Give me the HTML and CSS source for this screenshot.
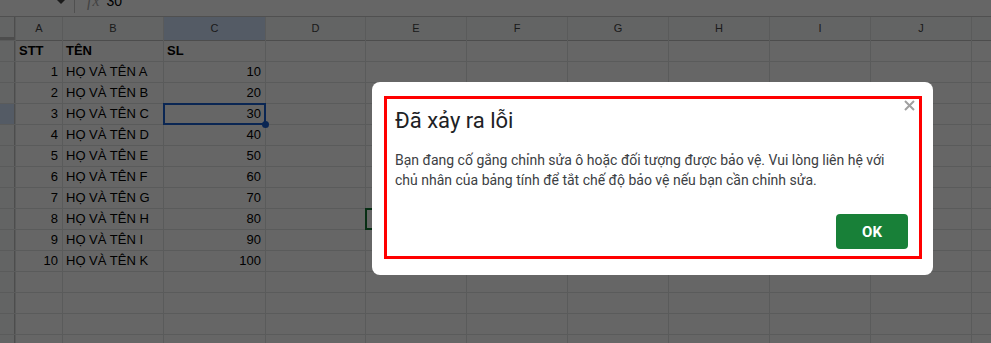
FILE: index.html
```html
<!DOCTYPE html>
<html lang="vi">
<head>
<meta charset="utf-8">
<title>Bảng tính</title>
<link rel="stylesheet" href="styles.css">
</head>
<body>
<div class="fbar">
  <div class="fbar-inner">
    <span class="caret"></span>
    <span class="sep"></span>
    <span class="fx">fx</span>
    <span class="fval">30</span>
  </div>
</div>
<div class="sheet">
  <div class="h corner"></div><div class="h col">A</div><div class="h col">B</div><div class="h col sel">C</div><div class="h col">D</div><div class="h col">E</div><div class="h col">F</div><div class="h col">G</div><div class="h col">H</div><div class="h col">I</div><div class="h col">J</div><div class="h col"></div>

  <div class="h rh"></div><div class="c b">STT</div><div class="c b">TÊN</div><div class="c b">SL</div><div class="c"></div><div class="c"></div><div class="c"></div><div class="c"></div><div class="c"></div><div class="c"></div><div class="c"></div><div class="c"></div>

  <div class="h rh"></div><div class="c n">1</div><div class="c">HỌ VÀ TÊN A</div><div class="c n">10</div><div class="c"></div><div class="c"></div><div class="c"></div><div class="c"></div><div class="c"></div><div class="c"></div><div class="c"></div><div class="c"></div>

  <div class="h rh"></div><div class="c n">2</div><div class="c">HỌ VÀ TÊN B</div><div class="c n">20</div><div class="c"></div><div class="c"></div><div class="c"></div><div class="c"></div><div class="c"></div><div class="c"></div><div class="c"></div><div class="c"></div>

  <div class="h rh sel"></div><div class="c n">3</div><div class="c">HỌ VÀ TÊN C</div><div class="c n active">30</div><div class="c"></div><div class="c"></div><div class="c"></div><div class="c"></div><div class="c"></div><div class="c"></div><div class="c"></div><div class="c"></div>

  <div class="h rh"></div><div class="c n">4</div><div class="c">HỌ VÀ TÊN D</div><div class="c n">40</div><div class="c"></div><div class="c"></div><div class="c"></div><div class="c"></div><div class="c"></div><div class="c"></div><div class="c"></div><div class="c"></div>

  <div class="h rh"></div><div class="c n">5</div><div class="c">HỌ VÀ TÊN E</div><div class="c n">50</div><div class="c"></div><div class="c"></div><div class="c"></div><div class="c"></div><div class="c"></div><div class="c"></div><div class="c"></div><div class="c"></div>

  <div class="h rh"></div><div class="c n">6</div><div class="c">HỌ VÀ TÊN F</div><div class="c n">60</div><div class="c"></div><div class="c"></div><div class="c"></div><div class="c"></div><div class="c"></div><div class="c"></div><div class="c"></div><div class="c"></div>

  <div class="h rh"></div><div class="c n">7</div><div class="c">HỌ VÀ TÊN G</div><div class="c n">70</div><div class="c"></div><div class="c"></div><div class="c"></div><div class="c"></div><div class="c"></div><div class="c"></div><div class="c"></div><div class="c"></div>

  <div class="h rh"></div><div class="c n">8</div><div class="c">HỌ VÀ TÊN H</div><div class="c n">80</div><div class="c"></div><div class="c peer"></div><div class="c"></div><div class="c"></div><div class="c"></div><div class="c"></div><div class="c"></div><div class="c"></div>

  <div class="h rh"></div><div class="c n">9</div><div class="c">HỌ VÀ TÊN I</div><div class="c n">90</div><div class="c"></div><div class="c"></div><div class="c"></div><div class="c"></div><div class="c"></div><div class="c"></div><div class="c"></div><div class="c"></div>

  <div class="h rh"></div><div class="c n">10</div><div class="c">HỌ VÀ TÊN K</div><div class="c n">100</div><div class="c"></div><div class="c"></div><div class="c"></div><div class="c"></div><div class="c"></div><div class="c"></div><div class="c"></div><div class="c"></div>

  <div class="h rh"></div><div class="c"></div><div class="c"></div><div class="c"></div><div class="c"></div><div class="c"></div><div class="c"></div><div class="c"></div><div class="c"></div><div class="c"></div><div class="c"></div><div class="c"></div>

  <div class="h rh"></div><div class="c"></div><div class="c"></div><div class="c"></div><div class="c"></div><div class="c"></div><div class="c"></div><div class="c"></div><div class="c"></div><div class="c"></div><div class="c"></div><div class="c"></div>

  <div class="h rh"></div><div class="c"></div><div class="c"></div><div class="c"></div><div class="c"></div><div class="c"></div><div class="c"></div><div class="c"></div><div class="c"></div><div class="c"></div><div class="c"></div><div class="c"></div>

  <div class="h rh"></div><div class="c"></div><div class="c"></div><div class="c"></div><div class="c"></div><div class="c"></div><div class="c"></div><div class="c"></div><div class="c"></div><div class="c"></div><div class="c"></div><div class="c"></div>
</div>

<div class="overlay"></div>

<div class="dialog" role="dialog">
  <svg class="close" width="11" height="11" viewBox="0 0 11 11" aria-hidden="true">
    <path d="M1 1 L10 10 M10 1 L1 10" stroke="#a0a0a0" stroke-width="2" fill="none"/>
  </svg>
  <div class="frame">
    <h1 class="title">Đã xảy ra lỗi</h1>
    <p class="msg">Bạn đang cố gắng chỉnh sửa ô hoặc đối tượng được bảo vệ. Vui lòng liên hệ với<br>chủ nhân của bảng tính để tắt chế độ bảo vệ nếu bạn cần chỉnh sửa.</p>
    <button class="ok">OK</button>
  </div>
</div>
</body>
</html>
```

FILE: styles.css
```css
html, body {
  margin: 0;
  padding: 0;
  width: 991px;
  height: 343px;
  overflow: hidden;
  background: #ffffff;
  font-family: "Liberation Sans", Arial, sans-serif;
}

/* formula bar (cut off at the top) */
.fbar {
  height: 16px;
  border-bottom: 1px solid #c7c7c7;
  overflow: hidden;
  background: #ffffff;
}
.fbar-inner {
  display: flex;
  align-items: center;
  height: 20px;
  margin-top: -9px;
  padding-left: 56px;
}
.caret {
  width: 0;
  height: 0;
  border-left: 5px solid transparent;
  border-right: 5px solid transparent;
  border-top: 5px solid #444444;
}
.sep {
  width: 1px;
  height: 24px;
  background: #c7c7c7;
  margin-left: 8px;
}
.fx {
  margin-left: 12px;
  font-family: "Liberation Serif", serif;
  font-style: italic;
  font-size: 16px;
  letter-spacing: 1px;
  color: #a8a8a8;
}
.fval {
  margin-left: 6px;
  font-size: 14px;
  color: #000000;
}

/* grid */
.sheet {
  display: grid;
  grid-template-columns: 15px 46px 100px 101px 99px 100px 100px 100px 100px 100px 100px 1fr;
  grid-template-rows: 23px;
  grid-auto-rows: 20px;
  gap: 1px;
  background: #e2e3e3;
}
.h {
  background: #f8f9fa;
  color: #444444;
  font-size: 11px;
  line-height: 23px;
  text-align: center;
}
.col {
  box-shadow: 0 1px 0 #c0c0c0;
}
.corner {
  border-right: 1px solid #c0c0c0;
  border-bottom: 3px solid #c0c0c0;
  box-sizing: border-box;
}
.rh {
  border-right: 1px solid #c0c0c0;
  box-sizing: border-box;
}
.h.sel {
  background: #d3e3fd;
}
.c {
  background: #ffffff;
  font-size: 13px;
  line-height: 20px;
  padding: 0 3px;
  white-space: nowrap;
  overflow: hidden;
  color: #000000;
  min-width: 0;
}
.c.b {
  font-weight: bold;
}
.c.n {
  text-align: right;
  padding-right: 4px;
}
.c.active {
  position: relative;
  z-index: 1;
  overflow: visible;
  outline: 2px solid #1a5fd0;
  outline-offset: -1px;
}
.c.active::after {
  content: "";
  position: absolute;
  right: -4px;
  bottom: -4px;
  width: 7px;
  height: 7px;
  border-radius: 50%;
  background: #1a5fd0;
}
.c.peer {
  position: relative;
  z-index: 1;
  outline: 2px solid #137333;
  outline-offset: -1px;
}

/* modal */
.overlay {
  position: fixed;
  inset: 0;
  background: rgba(0, 0, 0, 0.6);
  z-index: 10;
}
.dialog {
  position: fixed;
  left: 372px;
  top: 82px;
  width: 561px;
  height: 193px;
  box-sizing: border-box;
  padding: 14px 11px 16px 12px;
  background: #ffffff;
  border-radius: 8px;
  z-index: 20;
  font-family: Roboto, "Noto Sans", sans-serif;
}
.close {
  position: absolute;
  top: 18px;
  right: 18px;
  display: block;
}
.frame {
  height: 100%;
  box-sizing: border-box;
  border: 3px solid #ff0000;
  padding: 8px 11px 7px 8px;
  display: flex;
  flex-direction: column;
}
.title {
  margin: 0;
  font-size: 22px;
  line-height: 28px;
  font-weight: 400;
  color: #202124;
}
.msg {
  margin: 15px 0 0 0;
  font-size: 14px;
  line-height: 20px;
  color: #3c4043;
  white-space: nowrap;
}
.ok {
  margin-top: auto;
  align-self: flex-end;
  width: 72px;
  height: 35px;
  border: none;
  border-radius: 4px;
  background: #188038;
  color: #ffffff;
  font-family: Roboto, "Liberation Sans", sans-serif;
  font-weight: 700;
  font-size: 15px;
  padding: 0;
}
```
